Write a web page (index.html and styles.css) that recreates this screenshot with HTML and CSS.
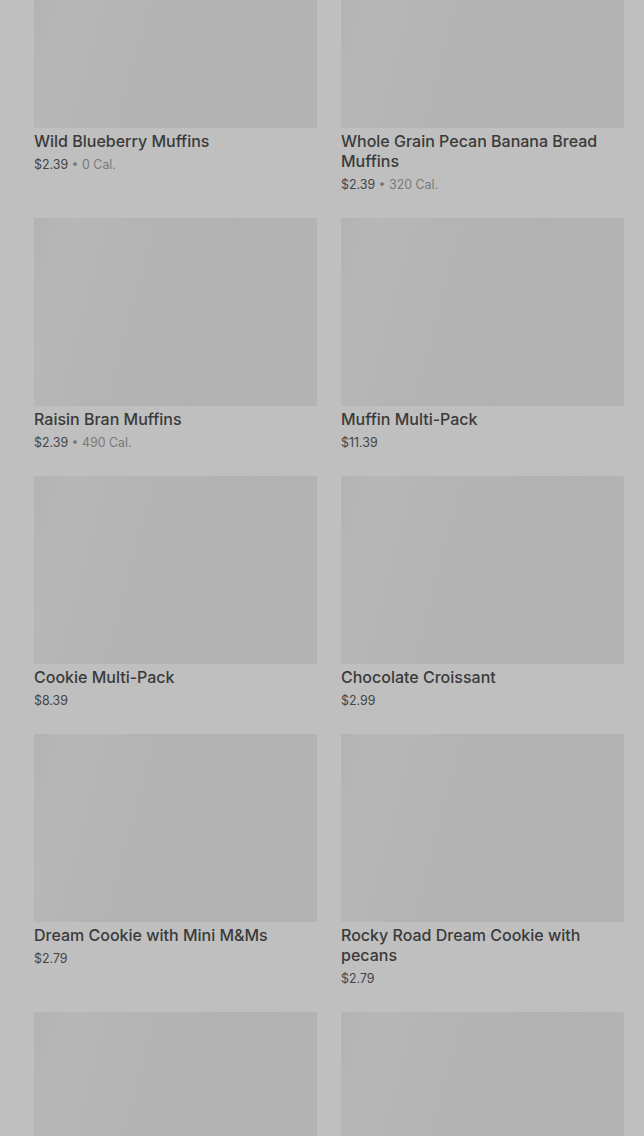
FILE: index.html
```html
<!DOCTYPE html>
<html>
<head>
<meta charset="utf-8">
<link rel="stylesheet" href="styles.css">
</head>
<body>
<div class="page">
  <div class="grid">
    <div class="card first">
      <div class="img"></div>
      <div class="title">Wild Blueberry Muffins</div>
      <div class="price">$2.39 <span class="cal">• 0 Cal.</span></div>
    </div>
    <div class="card first">
      <div class="img"></div>
      <div class="title">Whole Grain Pecan Banana Bread Muffins</div>
      <div class="price">$2.39 <span class="cal">• 320 Cal.</span></div>
    </div>
    <div class="card">
      <div class="img"></div>
      <div class="title">Raisin Bran Muffins</div>
      <div class="price">$2.39 <span class="cal">• 490 Cal.</span></div>
    </div>
    <div class="card">
      <div class="img"></div>
      <div class="title">Muffin Multi-Pack</div>
      <div class="price">$11.39</div>
    </div>
    <div class="card">
      <div class="img"></div>
      <div class="title">Cookie Multi-Pack</div>
      <div class="price">$8.39</div>
    </div>
    <div class="card">
      <div class="img"></div>
      <div class="title">Chocolate Croissant</div>
      <div class="price">$2.99</div>
    </div>
    <div class="card">
      <div class="img"></div>
      <div class="title">Dream Cookie with Mini M&amp;Ms</div>
      <div class="price">$2.79</div>
    </div>
    <div class="card">
      <div class="img"></div>
      <div class="title">Rocky Road Dream Cookie with pecans</div>
      <div class="price">$2.79</div>
    </div>
    <div class="card">
      <div class="img"></div>
    </div>
    <div class="card">
      <div class="img"></div>
    </div>
  </div>
</div>
</body>
</html>
```
FILE: styles.css
```css
html, body {
  margin: 0;
  padding: 0;
  background: #bfbfbf;
  overflow: hidden;
}
.page {
  height: 1136px;
  overflow: hidden;
  padding: 0 20px 0 34px;
  font-family: Inter, "Liberation Sans", sans-serif;
}
.grid {
  display: grid;
  grid-template-columns: 283px 283px;
  column-gap: 24px;
  row-gap: 23px;
}
.card {
  display: flex;
  flex-direction: column;
}
.img {
  height: 188px;
  background: linear-gradient(105deg, #b3b3b3 0%, #b7b7b7 12%, #b4b4b4 30%, #b2b2b2 60%, #b3b3b3 100%);
}
.first .img {
  height: 128px;
}
.title {
  margin-top: 3px;
  font-size: 16px;
  font-weight: 500;
  line-height: 20px;
  color: #3a3a3a;
}
.price {
  margin-top: 4px;
  font-size: 12.4px;
  line-height: 20px;
  color: #444444;
}
.cal {
  color: #7a7a7a;
}
```
